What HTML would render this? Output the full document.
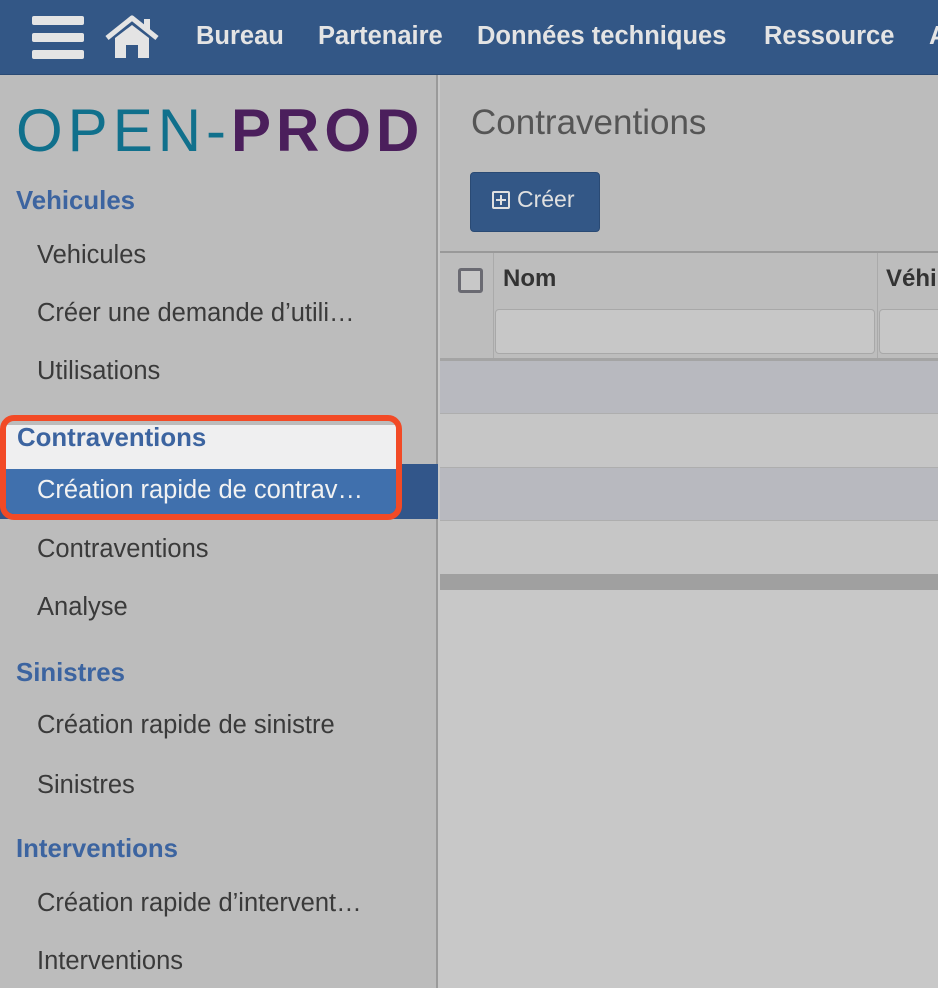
<!DOCTYPE html>
<html><head><meta charset="utf-8"><style>
*{margin:0;padding:0;box-sizing:border-box}
body{width:938px;height:988px;overflow:hidden;background:#c8c8c8;font-family:"Liberation Sans",sans-serif;position:relative}
.top{position:absolute;left:0;top:0;width:938px;height:75px;background:#335786;border-bottom:1px solid #2a4a74}
.nav{position:absolute;top:22px;font-weight:bold;font-size:25.5px;color:#e4e4e4;white-space:nowrap}
.side{position:absolute;left:0;top:75px;width:438px;height:913px;background:#bcbcbc;border-right:2px solid #9a9a9a}
.main{position:absolute;left:440px;top:75px;width:498px;height:913px;background:#bcbcbc}
.h{position:absolute;left:16px;font-weight:bold;font-size:25.8px;color:#3c64a0;white-space:nowrap}
.i{position:absolute;left:37px;font-size:25.5px;color:#3a3a3a;white-space:nowrap}
.abs{position:absolute}
</style></head><body>
<div class="top">
  <div class="abs" style="left:32px;top:16px;width:52px;height:9px;background:#e4e4e4;border-radius:2px"></div>
  <div class="abs" style="left:32px;top:33px;width:52px;height:9px;background:#e4e4e4;border-radius:2px"></div>
  <div class="abs" style="left:32px;top:50px;width:52px;height:9px;background:#e4e4e4;border-radius:2px"></div>
  <svg class="abs" style="left:104px;top:14px" width="56" height="46" viewBox="0 0 56 46">
    <path d="M3 24 L28 4 L53 24" stroke="#e4e4e4" stroke-width="5" fill="none" stroke-linejoin="round"/>
    <rect x="40" y="5" width="6" height="12" fill="#e4e4e4"/>
    <path d="M11 24 L28 11 L45 24 L45 44 L34 44 L34 31 L22 31 L22 44 L11 44 Z" fill="#e4e4e4"/>
  </svg>
  <div class="nav" style="left:196px">Bureau</div>
  <div class="nav" style="left:318px">Partenaire</div>
  <div class="nav" style="left:477px">Données techniques</div>
  <div class="nav" style="left:764px">Ressource</div>
  <div class="nav" style="left:929px">A</div>
</div>
<div class="side">
  <div class="abs" style="left:16px;top:23px;font-size:60px;letter-spacing:5px;line-height:66px;white-space:nowrap"><span style="color:#10708c">OPEN</span><span style="color:#10708c">-</span><span style="color:#4b1f5c;font-weight:bold">PROD</span></div>
  <div class="h" style="top:112px">Vehicules</div>
  <div class="i" style="top:166px">Vehicules</div>
  <div class="i" style="top:224px">Créer une demande d’utili…</div>
  <div class="i" style="top:282px">Utilisations</div>
  <div class="abs" style="left:0;top:389px;width:438px;height:55px;background:#32568a"></div>
  <div class="abs" style="left:0;top:340px;width:402px;height:105px;border:6px solid #f24a26;border-radius:14px;overflow:hidden">
    <div class="abs" style="left:0;top:4px;width:390px;height:44px;background:#efeff0"></div>
    <div class="abs" style="left:0;top:48px;width:390px;height:55px;background:#4070ad"></div>
  </div>
  <div class="h" style="top:349px;left:17px">Contraventions</div>
  <div class="i" style="top:401px;color:#f2f2f2">Création rapide de contrav…</div>
  <div class="i" style="top:460px">Contraventions</div>
  <div class="i" style="top:518px">Analyse</div>
  <div class="h" style="top:584px">Sinistres</div>
  <div class="i" style="top:636px">Création rapide de sinistre</div>
  <div class="i" style="top:696px">Sinistres</div>
  <div class="h" style="top:760px">Interventions</div>
  <div class="i" style="top:814px">Création rapide d’intervent…</div>
  <div class="i" style="top:872px">Interventions</div>
</div>
<div class="main">
  <div class="abs" style="left:31px;top:28px;font-size:35px;color:#555">Contraventions</div>
  <div class="abs" style="left:30px;top:97px;width:130px;height:60px;background:#335786;border-radius:4px;border:1px solid #2a4a74"></div>
  <div class="abs" style="left:52px;top:116px;width:18px;height:18px;border:2px solid #e0e0e0;border-radius:2px"></div>
  <div class="abs" style="left:56px;top:124px;width:10px;height:2px;background:#e0e0e0"></div>
  <div class="abs" style="left:60px;top:120px;width:2px;height:10px;background:#e0e0e0"></div>
  <div class="abs" style="left:77px;top:111px;font-size:23px;color:#e0e0e0">Créer</div>
  <div class="abs" style="left:0;top:176px;width:498px;height:2px;background:#999"></div>
  <div class="abs" style="left:0;top:178px;width:498px;height:107px;background:#bdbdbd"></div>
  <div class="abs" style="left:18px;top:193px;width:25px;height:25px;border:3px solid #6a6a72;border-radius:3px;background:#c8c8c8"></div>
  <div class="abs" style="left:53px;top:178px;width:1px;height:107px;background:#aaa"></div>
  <div class="abs" style="left:437px;top:178px;width:1px;height:107px;background:#aaa"></div>
  <div class="abs" style="left:63px;top:190px;font-size:24px;font-weight:bold;color:#333">Nom</div>
  <div class="abs" style="left:446px;top:190px;font-size:24px;font-weight:bold;color:#333">Véhi</div>
  <div class="abs" style="left:55px;top:234px;width:380px;height:45px;background:#c7c7c7;border:1px solid #a8a8a8;border-radius:4px"></div>
  <div class="abs" style="left:439px;top:234px;width:80px;height:45px;background:#c7c7c7;border:1px solid #a8a8a8;border-radius:4px"></div>
  <div class="abs" style="left:0;top:283px;width:498px;height:3px;background:#a4a4a4"></div>
  <div class="abs" style="left:0;top:286px;width:498px;height:52px;background:#b8b9bf"></div>
  <div class="abs" style="left:0;top:338px;width:498px;height:54px;background:#c6c6c6;border-top:1px solid #aeaeae"></div>
  <div class="abs" style="left:0;top:392px;width:498px;height:53px;background:#b8b9bf;border-top:1px solid #aeaeae"></div>
  <div class="abs" style="left:0;top:445px;width:498px;height:54px;background:#c6c6c6;border-top:1px solid #aeaeae"></div>
  <div class="abs" style="left:0;top:499px;width:498px;height:16px;background:#a0a0a0"></div>
  <div class="abs" style="left:0;top:515px;width:498px;height:398px;background:#c8c8c8"></div>
</div>
</body></html>
